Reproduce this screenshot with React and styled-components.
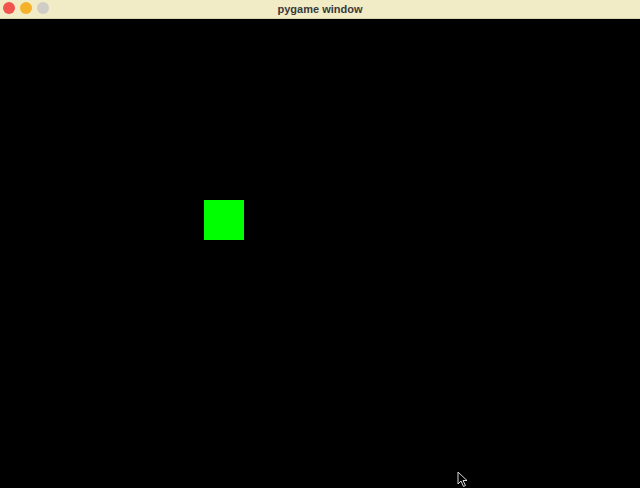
import styled, { createGlobalStyle } from 'styled-components'

const Global = createGlobalStyle`
    html, body {
        margin: 0;
        padding: 0;
        background: #000;
    }
`;

const Window = styled.div`
    display: flex;
    flex-direction: column;
    width: 640px;
    height: 488px;
    overflow: hidden;
`;

const TitleBar = styled.div`
    position: relative;
    display: flex;
    align-items: center;
    justify-content: center;
    height: 19px;
    background: #f1ecc6;
    border-bottom: 1px solid #d8d3b0;
    box-sizing: border-box;
`;

const Lights = styled.div`
    position: absolute;
    left: 3px;
    top: 2px;
    display: flex;
    gap: 5px;
`;

const Light = styled.span`
    width: 12px;
    height: 12px;
    border-radius: 50%;
    background: ${p => p.color};
`;

const Title = styled.span`
    font-family: "Liberation Sans", Arial, sans-serif;
    font-size: 11px;
    font-weight: bold;
    color: #3a3a3a;
`;

const Canvas = styled.div`
    position: relative;
    flex: 1;
    background: #000;
`;

const Player = styled.div`
    position: absolute;
    left: 204px;
    top: 181px;
    width: 40px;
    height: 40px;
    background: #00ff00;
`;

const Cursor = styled.svg`
    position: absolute;
    left: 457px;
    top: 452px;
`;

export default function App() {
    return (
        <>
            <Global />
            <Window>
                <TitleBar>
                    <Lights>
                        <Light color="#f0544c" />
                        <Light color="#f5b12a" />
                        <Light color="#cfcdc6" />
                    </Lights>
                    <Title>pygame window</Title>
                </TitleBar>
                <Canvas>
                    <Player />
                    <Cursor width="12" height="18" viewBox="0 0 12 18">
                        <path d="M1 1 L1 13 L4 10 L6.5 15.5 L8.5 14.5 L6 9.5 L10 9.5 Z" fill="#000" stroke="#d8d8d8" strokeWidth="1" />
                    </Cursor>
                </Canvas>
            </Window>
        </>
    )
}
